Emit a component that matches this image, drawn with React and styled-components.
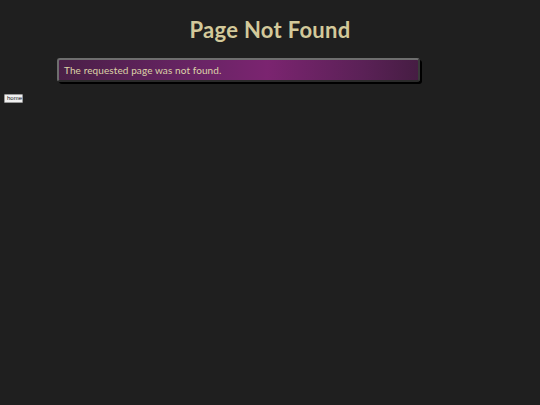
import React from "react";
import styled, { createGlobalStyle } from "styled-components";

const Global = createGlobalStyle`
  html, body { margin: 0; padding: 0; background: #1f1f1f; }
  body { font-family: "Comic Sans MS", Lato, sans-serif; }
`;

const Page = styled.div`
  width: 540px;
  height: 405px;
  background: #1f1f1f;
  display: flex;
  flex-direction: column;
  padding-top: 16px;
  box-sizing: border-box;
`;

const Title = styled.h1`
  margin: 0;
  text-align: center;
  font-size: 22px;
  font-weight: bold;
  letter-spacing: 0.3px;
  color: #d3c99a;
  line-height: 28px;
`;

const Message = styled.div`
  margin: 14px 0 0 57px;
  width: 354px;
  height: 20px;
  box-sizing: content-box;
  border: 2px solid #6e6e6e;
  border-right-color: #3a3a3a;
  border-bottom-color: #2a2a2a;
  border-radius: 3px;
  box-shadow: 2px 2px 0 #000;
  background: linear-gradient(to right, #4a1f47 0%, #6a2466 40%, #7b2470 58%, #5a2156 85%, #461d43 100%);
  color: #dcd3a8;
  font-size: 10px;
  letter-spacing: 0.1px;
  line-height: 21px;
  padding-left: 5px;
`;

const HomeButton = styled.button`
  margin: 12px 0 0 4px;
  align-self: flex-start;
  font-family: "Liberation Sans", sans-serif;
  font-size: 6px;
  line-height: 7px;
  padding: 0 2px;
  background: #f0f0f0;
  color: #111;
  border: 1px solid #999;
  border-radius: 1px;
  height: 9px;
  width: 19px;
`;

export default function App() {
  return (
    <>
      <Global />
      <Page>
        <Title>Page Not Found</Title>
        <Message>The requested page was not found.</Message>
        <HomeButton>home</HomeButton>
      </Page>
    </>
  );
}
